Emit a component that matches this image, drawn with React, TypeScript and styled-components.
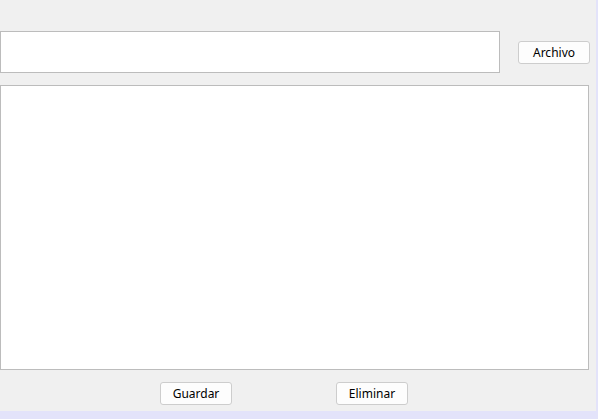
import React from "react";
import styled, { createGlobalStyle } from "styled-components";

const Global = createGlobalStyle`
  html, body { margin: 0; padding: 0; background: #e3e3fa; }
  body { font-family: "Segoe UI", "Noto Sans", "Open Sans", sans-serif; }
`;

const Page = styled.div`
  width: 598px;
  height: 419px;
  background: #e3e3fa;
`;

const Window = styled.div`
  width: 596px;
  height: 411px;
  background: #f0f0f0;
  display: flex;
  flex-direction: column;
  padding-top: 31px;
  box-sizing: border-box;
`;

const TopRow = styled.div`
  display: flex;
  align-items: flex-start;
  gap: 18px;
  height: 42px;
`;

const PathField = styled.input`
  display: block;
  width: 500px;
  height: 42px;
  box-sizing: border-box;
  border: 1px solid #bcbcbc;
  background: #ffffff;
  margin: 0;
  padding: 0;
  outline: none;
`;

const Button = styled.button<{ $top?: number }>`
  display: block;
  width: 72px;
  height: 23px;
  box-sizing: border-box;
  margin: ${(p) => p.$top ?? 0}px 0 0 0;
  padding: 0;
  border: 1px solid #cdcdcd;
  border-radius: 3px;
  background: #fdfdfd;
  font-family: "Segoe UI", "Noto Sans", "Open Sans", sans-serif;
  font-size: 12px;
  color: #000;
  line-height: 20px;
`;

const Editor = styled.textarea`
  width: 589px;
  height: 285px;
  box-sizing: border-box;
  margin: 12px 0 0 0;
  padding: 0;
  border: 1px solid #bcbcbc;
  background: #ffffff;
  resize: none;
  outline: none;
  display: block;
`;

const BottomRow = styled.div`
  display: flex;
  gap: 104px;
  padding-left: 160px;
  margin-top: 12px;
`;

export default function App() {
  return (
    <Page>
      <Global />
      <Window>
        <TopRow>
          <PathField />
          <Button $top={10}>Archivo</Button>
        </TopRow>
        <Editor />
        <BottomRow>
          <Button>Guardar</Button>
          <Button>Eliminar</Button>
        </BottomRow>
      </Window>
    </Page>
  );
}
